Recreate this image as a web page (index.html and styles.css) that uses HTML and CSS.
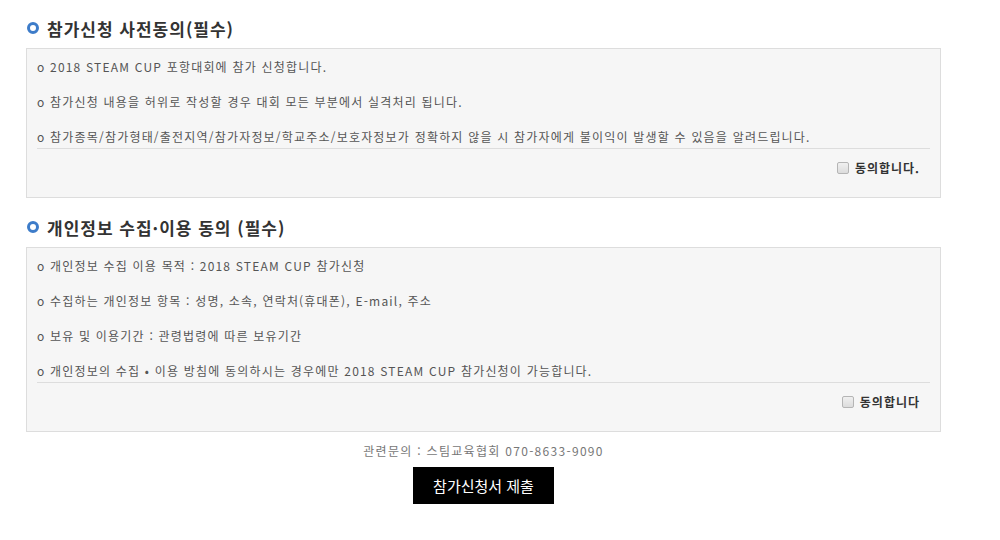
FILE: index.html
```html
<!DOCTYPE html>
<html lang="ko">
<head>
    <meta charset="UTF-8">
    <title>참가신청</title>
    <meta name="viewport" content="width=device-width, initial-scale=1.0">
    <link rel="stylesheet" href="styles.css">
</head>
<body>
<div class="wrap">
    <h3 class="tit"><span class="dot"></span>참가신청 사전동의(필수)</h3>
    <div class="agree-box">
        <div class="agree-text">
            <p>o 2018 STEAM CUP 포항대회에 참가 신청합니다.</p>
            <p>o 참가신청 내용을 허위로 작성할 경우 대회 모든 부분에서 실격처리 됩니다.</p>
            <p>o 참가종목/참가형태/출전지역/참가자정보/학교주소/보호자정보가 정확하지 않을 시 참가자에게 불이익이 발생할 수 있음을 알려드립니다.</p>
        </div>
        <div class="agree-check">
            <label><input type="checkbox" name="agree1"> 동의합니다.</label>
        </div>
    </div>

    <h3 class="tit"><span class="dot"></span>개인정보 수집·이용 동의 (필수)</h3>
    <div class="agree-box">
        <div class="agree-text">
            <p>o 개인정보 수집 이용 목적 : 2018 STEAM CUP 참가신청</p>
            <p>o 수집하는 개인정보 항목 : 성명, 소속, 연락처(휴대폰), E-mail, 주소</p>
            <p>o 보유 및 이용기간 : 관령법령에 따른 보유기간</p>
            <p>o 개인정보의 수집 • 이용 방침에 동의하시는 경우에만 2018 STEAM CUP 참가신청이 가능합니다.</p>
        </div>
        <div class="agree-check">
            <label><input type="checkbox" name="agree2"> 동의합니다</label>
        </div>
    </div>

    <p class="contact">관련문의 : 스팀교육협회 070-8633-9090</p>
    <div class="btn-area">
        <button type="submit" class="btn-submit">참가신청서 제출</button>
    </div>
</div>
</body>
</html>
```

FILE: styles.css
```css
body {
    margin: 0;
    font-family: "Noto Sans CJK KR", "Noto Sans", sans-serif;
    color: #555;
    background: #fff;
}
.wrap {
    width: 915px;
    margin-left: 26px;
    padding-top: 16px;
}
.tit {
    display: flex;
    align-items: center;
    margin: 0 0 8px;
    height: 24px;
    font-size: 17px;
    font-weight: bold;
    color: #333;
    letter-spacing: 1px;
}
.dot {
    width: 6px;
    height: 6px;
    border: 3px solid #3d7cc9;
    border-radius: 50%;
    margin: 0 8px 0 1px;
    background: #fff;
}
.agree-box {
    border: 1px solid #ddd;
    background: #f6f6f6;
    padding: 7px 10px 0;
    margin-bottom: 17px;
}
.agree-text {
    border-bottom: 1px solid #ddd;
}
.agree-text p {
    margin: 0 0 13px;
    font-size: 12px;
    line-height: 22px;
    letter-spacing: 1.2px;
}
.agree-text p:last-child {
    margin-bottom: 0;
}
.agree-check {
    display: flex;
    justify-content: flex-end;
    align-items: center;
    height: 37px;
    padding: 0 10px 11px;
}
.agree-check label {
    display: flex;
    align-items: center;
    font-size: 12px;
    font-weight: bold;
    color: #333;
    letter-spacing: 1px;
}
.agree-check input {
    appearance: none;
    margin: 0 6px 0 0;
    width: 12px;
    height: 12px;
    border: 1px solid #b5b5b5;
    border-radius: 2px;
    background: linear-gradient(#f0f0f0, #dcdcdc);
}
.contact {
    margin: -7px 0 8px;
    text-align: center;
    font-size: 12px;
    color: #777;
    letter-spacing: 1.3px;
}
.btn-area {
    text-align: center;
}
.btn-submit {
    width: 141px;
    height: 37px;
    border: none;
    background: #000;
    color: #fff;
    font-family: inherit;
    font-size: 15px;
    cursor: pointer;
}
```
